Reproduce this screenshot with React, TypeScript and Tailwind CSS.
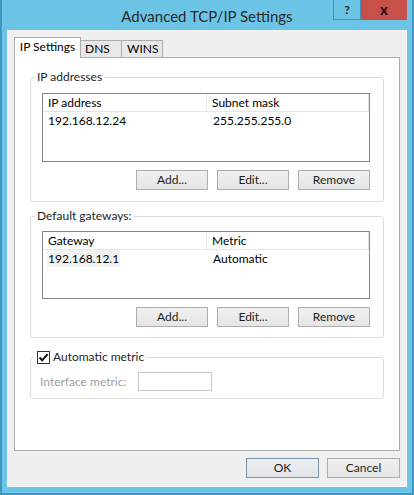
import React from 'react';

const font = "font-['Lato','Noto_Sans',sans-serif]";

function Btn({ label, className = '' }: { label: string; className?: string }) {
  return (
    <button
      className={`h-[20px] w-[72px] border border-[#adadad] bg-gradient-to-b from-[#f0f0f0] to-[#e5e5e5] text-[12px] leading-none text-[#1e1e1e] ${className}`}
    >
      {label}
    </button>
  );
}

// Listview with two columns
function ListView({
  cols,
  row,
  height,
  highlight = false,
}: {
  cols: [string, string];
  row: [string, string];
  height: string;
  highlight?: boolean;
}) {
  return (
    <div className={`${height} border border-[#828790] bg-white`}>
      <div className="flex h-[18px] border-b border-[#e5e5e5]">
        <div className="flex w-[164px] items-center border-r border-[#e5e5e5] pl-[5px]">{cols[0]}</div>
        <div className="flex flex-1 items-center border-r border-[#e5e5e5] pl-[5px]">{cols[1]}</div>
      </div>
      <div className="flex h-[17px] items-center">
        <div className="w-[165px] pl-[4px]">
          <span className={`px-[1px] py-[1px] ${highlight ? 'bg-[#f2f2f2]' : ''}`}>{row[0]}</span>
        </div>
        <div className="pl-[5px]">{row[1]}</div>
      </div>
    </div>
  );
}

function Group({
  legend,
  children,
  className = '',
}: {
  legend: React.ReactNode;
  children: React.ReactNode;
  className?: string;
}) {
  return (
    <fieldset className={`rounded-[3px] border border-[#dcdcdc] px-0 ${className}`}>
      <legend className="ml-[4px] px-[2px] leading-[16px] text-[#1e1e1e]">{legend}</legend>
      {children}
    </fieldset>
  );
}

export default function App() {
  return (
    <div className={`h-[495px] w-[414px] overflow-hidden border-x-2 border-b-2 border-[#3f97c0] bg-[#6cc5e6] px-[5px] text-[12px] ${font}`}>
      {/* Title bar */}
      <div className="relative flex h-[30px] items-center justify-center">
        <span className="mt-[2px] text-[15px] text-[#2a2a2a]">Advanced TCP/IP Settings</span>
        <div className="absolute right-[0px] top-0 flex h-[20px]">
          <div className="flex w-[28px] items-center justify-center border-x border-b border-[#3f8fb6] text-[12px] font-bold text-[#1a2a33]">
            ?
          </div>
          <div className="flex w-[46px] items-center justify-center bg-[#c7504b] pb-[2px] text-[15px] font-bold text-[#1b1010]">
            x
          </div>
        </div>
      </div>

      {/* Client area */}
      <div className="flex h-[457px] flex-col border-x border-b border-[#f7fbfd] bg-[#f0f0f0] px-[6px] pt-[7px]">
        {/* Tabs */}
        <div className="flex h-[20px] items-end">
          <div className="relative z-10 -mb-px flex h-[21px] w-[67px] items-center justify-center border-x border-t border-[#acacac] bg-white pb-[2px]">
            IP Settings
          </div>
          <div className="flex h-[17px] w-[41px] items-center border-t border-r border-[#acacac] bg-[#e8e8e8] pl-[4px]">
            DNS
          </div>
          <div className="flex h-[17px] w-[41px] items-center border-t border-r border-[#acacac] bg-[#e8e8e8] pl-[5px]">
            WINS
          </div>
        </div>

        {/* Tab panel */}
        <div className="flex h-[394px] flex-col border border-[#acacac] bg-white px-[15px] pt-[11px]">
          <Group legend="IP addresses">
            <div className="pl-[11px] pr-[13px] pt-[8px] pb-[11px]">
              <ListView cols={['IP address', 'Subnet mask']} row={['192.168.12.24', '255.255.255.0']} height="h-[69px]" />
              <div className="mt-[8px] flex justify-end gap-[9px]">
                <Btn label="Add..." />
                <Btn label="Edit..." />
                <Btn label="Remove" />
              </div>
            </div>
          </Group>

          <Group legend="Default gateways:" className="mt-[6px]">
            <div className="pl-[11px] pr-[13px] pt-[7px] pb-[10px]">
              <ListView cols={['Gateway', 'Metric']} row={['192.168.12.1', 'Automatic']} height="h-[68px]" highlight />
              <div className="mt-[8px] flex justify-end gap-[9px]">
                <Btn label="Add..." />
                <Btn label="Edit..." />
                <Btn label="Remove" />
              </div>
            </div>
          </Group>

          <Group
            className="mt-[11px]"
            legend={
              <span className="flex items-center gap-[3px]">
                <span className="flex h-[13px] w-[13px] items-center justify-center border border-[#333] bg-white">
                  <svg width="11" height="11" viewBox="0 0 11 11">
                    <path d="M1.5 5.5 L4.2 8.3 L9.6 2.2" fill="none" stroke="#111" strokeWidth="2" />
                  </svg>
                </span>
                Automatic metric
              </span>
            }
          >
            <div className="flex items-center pl-[9px] pt-[7px] pb-[7px]">
              <span className="w-[98px] text-[#a0a0a0]">Interface metric:</span>
              <div className="h-[19px] w-[74px] border border-[#c9c9c9] bg-white" />
            </div>
          </Group>
        </div>

        {/* Dialog buttons */}
        <div className="mt-[7px] flex justify-end gap-[8px]">
          <button className="h-[20px] w-[73px] border border-[#7e94aa] bg-gradient-to-b from-[#edf0f3] to-[#e0e4e8] text-[12px] leading-none text-[#1e1e1e]">
            OK
          </button>
          <button className="h-[20px] w-[73px] border border-[#adadad] bg-gradient-to-b from-[#f0f0f0] to-[#e5e5e5] text-[12px] leading-none text-[#1e1e1e]">
            Cancel
          </button>
        </div>
      </div>
    </div>
  );
}
